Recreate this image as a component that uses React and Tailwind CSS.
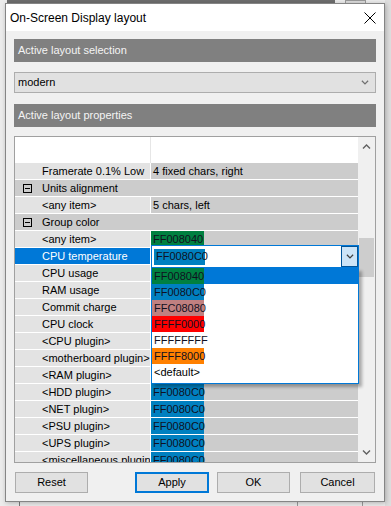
import React from 'react';

const rows = [
  { label: 'Framerate 0.1% Low', value: '4 fixed chars, right' },
  { cat: true, label: 'Units alignment' },
  { label: '<any item>', value: '5 chars, left' },
  { cat: true, label: 'Group color' },
  { label: '<any item>', color: '#008040', value: 'FF008040' },
  { label: 'CPU temperature', selected: true },
  // values of these rows sit under the open drop-down
  { label: 'CPU usage' },
  { label: 'RAM usage' },
  { label: 'Commit charge' },
  { label: 'CPU clock' },
  { label: '<CPU plugin>' },
  { label: '<motherboard plugin>' },
  { label: '<RAM plugin>' },
  { label: '<HDD plugin>', color: '#0080c0', value: 'FF0080C0' },
  { label: '<NET plugin>', color: '#0080c0', value: 'FF0080C0' },
  { label: '<PSU plugin>', color: '#0080c0', value: 'FF0080C0' },
  { label: '<UPS plugin>', color: '#0080c0', value: 'FF0080C0' },
  { label: '<miscellaneous plugin>', color: '#0080c0', value: 'FF0080C0' },
];

const options = [
  { value: 'FF008040', color: '#008040' },
  { value: 'FF0080C0', color: '#0080c0' },
  { value: 'FFC08080', color: '#c08080' },
  { value: 'FFFF0000', color: '#ff0000' },
  { value: 'FFFFFFFF', color: '#ffffff' },
  { value: 'FFFF8000', color: '#ff8000' },
  { value: '<default>' },
];

const Chevron = ({ up, color = '#606060', w = 9 }) => (
  <svg width={w} height="5" viewBox="0 0 9 5" fill="none">
    <path
      d={up ? 'M1 4.5 L4.5 1 L8 4.5' : 'M1 0.5 L4.5 4 L8 0.5'}
      stroke={color}
      strokeWidth="1.4"
    />
  </svg>
);

const Swatch = ({ color, value, w = 'w-[53px]' }) => (
  <span
    className={`${w} h-full flex items-center pl-[2px] text-[#101020] shrink-0`}
    style={{ backgroundColor: color }}
  >
    {value}
  </span>
);

const GridRow = ({ row }) => {
  if (row.cat) {
    return (
      <div className="h-[17px] flex items-center bg-[#cccccc] border-b border-white shrink-0">
        <span className="ml-[8px] w-[9px] h-[9px] border border-black flex items-center justify-center">
          <span className="w-[5px] h-px bg-black" />
        </span>
        <span className="ml-[10px]">{row.label}</span>
      </div>
    );
  }
  return (
    <div className="h-[17px] flex border-b border-white shrink-0">
      <div
        className={`w-[136px] shrink-0 flex items-center pl-[27px] border-r border-white whitespace-nowrap overflow-hidden ${
          row.selected ? 'bg-[#0078d7] text-white' : 'bg-[#e3e3e3]'
        }`}
      >
        {row.label}
      </div>
      <div className="flex-1 bg-[#cccccc] flex items-center whitespace-nowrap overflow-hidden">
        {row.color ? (
          <Swatch color={row.color} value={row.value} />
        ) : (
          <span className="pl-[2px]">{row.value}</span>
        )}
      </div>
    </div>
  );
};

const Button = ({ children, primary, className = '' }) => (
  <button
    className={`h-[21px] flex items-center justify-center bg-[#e1e1e1] ${
      primary ? 'border-2 border-[#0078d7]' : 'border border-[#adadad]'
    } ${className}`}
  >
    {children}
  </button>
);

export default function App() {
  return (
    <div className="w-[391px] h-[506px] relative overflow-hidden bg-[#ececec] font-['Liberation_Sans',Arial,sans-serif] text-[11px] text-black leading-none">
      {/* parent window bits behind the dialog */}
      <div className="absolute top-0 left-[7px] w-[328px] h-[4px] bg-[#6e6e6e]" />
      <div className="absolute top-0 left-[345px] w-[21px] h-[4px] border border-[#9a9a9a] bg-[#dcdcdc]" />
      <div className="absolute top-0 right-0 w-[6px] h-[506px] bg-[#dedede]" />
      <div className="absolute top-[501px] left-[19px] w-[68px] h-[10px] border-l border-t border-[#7a7a7a]" />
      <div className="absolute top-[501px] left-[297px] w-[66px] h-[10px] border border-[#9a9a9a]" />

      {/* dialog */}
      <div className="absolute left-[5px] top-[3px] w-[380px] h-[499px] border border-[#858585] bg-[#f0f0f0] flex flex-col shadow-[1px_1px_5px_rgba(0,0,0,0.25)]">
        <div className="h-[27px] bg-white flex items-center justify-between pl-[4px] pr-[8px] shrink-0">
          <span className="text-[12px]">On-Screen Display layout</span>
          <svg width="12" height="12" viewBox="0 0 12 12">
            <path d="M0.5 0.5 L11.5 11.5 M11.5 0.5 L0.5 11.5" stroke="#000" strokeWidth="1" />
          </svg>
        </div>

        <div className="flex-1 flex flex-col px-[8px] pt-[8px]">
          <div className="h-[23px] bg-[#808080] text-[#f4f4f4] flex items-center pl-[4px]">
            Active layout selection
          </div>
          <div className="mt-[10px] h-[21px] bg-[#e1e1e1] border border-[#adadad] flex items-center justify-between pl-[3px] pr-[6px]">
            <span>modern</span>
            <Chevron color="#707070" w={8} />
          </div>
          <div className="mt-[11px] h-[23px] bg-[#808080] text-[#f4f4f4] flex items-center pl-[4px]">
            Active layout properties
          </div>

          {/* property grid */}
          <div className="mt-[9px] h-[327px] border border-[#a0a0a0] bg-white flex relative">
            <div className="w-[343px] flex flex-col overflow-hidden">
              <div className="h-[26px] shrink-0 flex">
                <div className="w-[136px] border-r border-[#e6e6e6]" />
              </div>
              {rows.map((row, i) => (
                <GridRow key={i} row={row} />
              ))}
            </div>
            <div className="w-[17px] bg-[#f0f0f0] relative flex flex-col items-center justify-between py-[7px]">
              <Chevron up />
              <Chevron />
              <div className="absolute left-[1px] top-[101px] w-[15px] h-[39px] bg-[#cdcdcd]" />
            </div>

            {/* in-place editor */}
            <div className="absolute left-[136px] top-[108px] w-[208px] h-[23px] border border-[#0078d7] bg-white flex items-center">
              <div className="ml-[2px] h-[16px] flex">
                <Swatch color="#0080c0" value="FF0080C0" w="w-[51px]" />
              </div>
              <div className="ml-auto w-[17px] h-full bg-[#cce4f7] border border-[#005499] flex items-center justify-center">
                <Chevron color="#404040" w={8} />
              </div>
            </div>

            {/* dropdown list */}
            <div className="absolute left-[136px] top-[131px] w-[208px] h-[116px] border border-t-0 border-[#0078d7] bg-white flex flex-col shadow-[3px_3px_3px_rgba(0,0,0,0.3)]">
              {options.map((o, i) => (
                <div
                  key={o.value}
                  className={`h-[16px] flex items-center shrink-0 ${i === 0 ? 'bg-[#0078d7]' : ''}`}
                >
                  {o.color ? (
                    <Swatch color={o.color} value={o.value} w="w-[52px]" />
                  ) : (
                    <span className="pl-[2px]">{o.value}</span>
                  )}
                </div>
              ))}
            </div>
          </div>

          {/* buttons */}
          <div className="mt-[9px] flex items-center">
            <Button className="ml-px w-[73px]">Reset</Button>
            <Button primary className="ml-auto w-[74px]">Apply</Button>
            <Button className="ml-[8px] w-[73px]">OK</Button>
            <Button className="ml-[10px] w-[75px] mr-px">Cancel</Button>
          </div>
        </div>
      </div>
    </div>
  );
}
